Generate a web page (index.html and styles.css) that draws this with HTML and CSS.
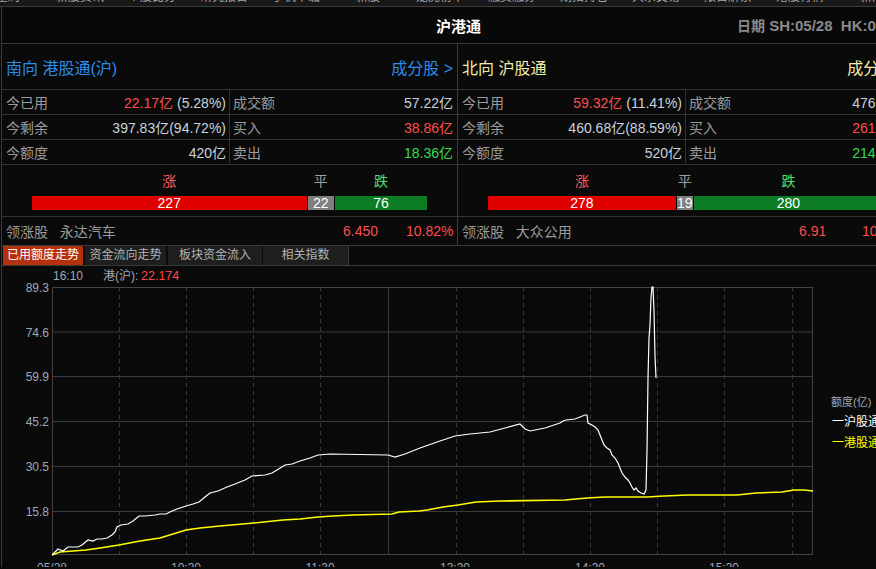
FILE: index.html
```html
<!DOCTYPE html>
<html lang="zh-CN">
<head>
<meta charset="utf-8">
<title>沪港通</title>
<link rel="stylesheet" href="styles.css">
</head>
<body>
<div class="app">
  <div class="menubar">
    <div class="menu-inner">
      <span>全局</span><span>新股资讯</span><span>个股比分</span><span>研究报告</span><span>手机下载</span><span>新股</span><span>龙虎榜单</span><span>融资融券</span><span>期指持仓</span><span>大宗交易</span><span>限售解禁</span><span>港股行情</span><span>新闻</span>
    </div>
  </div>
  <div class="titlebar">
    <div></div>
    <div class="title">沪港通</div>
    <div class="date"><span class="date-cn">日期</span> SH:05/28&nbsp;&nbsp;HK:05/28</div>
  </div>

  <div class="panels">
    <section class="panel">
      <div class="phead south"><span>南向 港股通(沪)</span><span>成分股 &gt;</span></div>
      <div class="prow">
        <div class="cell"><span class="lbl">今已用</span><span class="val"><span class="up">22.17亿</span> (5.28%)</span></div>
        <div class="cell"><span class="lbl">成交额</span><span class="val">57.22亿</span></div>
      </div>
      <div class="prow">
        <div class="cell"><span class="lbl">今剩余</span><span class="val">397.83亿(94.72%)</span></div>
        <div class="cell"><span class="lbl">买入</span><span class="val up">38.86亿</span></div>
      </div>
      <div class="prow">
        <div class="cell"><span class="lbl">今额度</span><span class="val">420亿</span></div>
        <div class="cell"><span class="lbl">卖出</span><span class="val down">18.36亿</span></div>
      </div>
      <div class="breadth">
        <div class="blabels">
          <span class="bl-up" style="flex-grow:227">涨</span><span class="bl-flat" style="flex-grow:22">平</span><span class="bl-down" style="flex-grow:76">跌</span>
        </div>
        <div class="bbar">
          <span class="seg seg-up" style="flex-grow:227">227</span><span class="seg seg-flat" style="flex-grow:22">22</span><span class="seg seg-down" style="flex-grow:76">76</span>
        </div>
      </div>
      <div class="leader">
        <span class="lbl">领涨股&nbsp;&nbsp;&nbsp;永达汽车</span><span class="up">6.450</span><span class="up">10.82%</span>
      </div>
    </section>

    <section class="panel">
      <div class="phead north"><span>北向 沪股通</span><span>成分股 &gt;</span></div>
      <div class="prow">
        <div class="cell"><span class="lbl">今已用</span><span class="val"><span class="up">59.32亿</span> (11.41%)</span></div>
        <div class="cell"><span class="lbl">成交额</span><span class="val">476.54亿</span></div>
      </div>
      <div class="prow">
        <div class="cell"><span class="lbl">今剩余</span><span class="val">460.68亿(88.59%)</span></div>
        <div class="cell"><span class="lbl">买入</span><span class="val up">261.93亿</span></div>
      </div>
      <div class="prow">
        <div class="cell"><span class="lbl">今额度</span><span class="val">520亿</span></div>
        <div class="cell"><span class="lbl">卖出</span><span class="val down">214.61亿</span></div>
      </div>
      <div class="breadth">
        <div class="blabels">
          <span class="bl-up" style="flex-grow:278">涨</span><span class="bl-flat" style="flex-grow:19">平</span><span class="bl-down" style="flex-grow:280">跌</span>
        </div>
        <div class="bbar">
          <span class="seg seg-up" style="flex-grow:278">278</span><span class="seg seg-flat" style="flex-grow:19">19</span><span class="seg seg-down" style="flex-grow:280">280</span>
        </div>
      </div>
      <div class="leader">
        <span class="lbl">领涨股&nbsp;&nbsp;&nbsp;大众公用</span><span class="up">6.91</span><span class="up">10.03%</span>
      </div>
    </section>
  </div>

  <div class="tabs">
    <span class="tab t1 active">已用额度走势</span>
    <span class="tab t2">资金流向走势</span>
    <span class="tab t3">板块资金流入</span>
    <span class="tab t4">相关指数</span>
  </div>

  <div class="chart">
    <svg class="chart-svg" width="913" height="301" viewBox="2 268 913 301" xmlns="http://www.w3.org/2000/svg">
      <text class="axis" x="53" y="282">16:10</text>
      <text class="axis" x="103" y="282">港(沪):</text>
      <text class="redtxt" x="141" y="282">22.174</text>

      <g class="grid">
        <line x1="52" y1="334" x2="813" y2="334"/>
        <line x1="52" y1="378.5" x2="813" y2="378.5"/>
        <line x1="52" y1="423.5" x2="813" y2="423.5"/>
        <line x1="52" y1="468.5" x2="813" y2="468.5"/>
        <line x1="52" y1="513.5" x2="813" y2="513.5"/>
        <line x1="388.5" y1="289" x2="388.5" y2="557"/>
      </g>
      <g class="dash">
        <line x1="119.5" y1="289" x2="119.5" y2="557"/>
        <line x1="186.5" y1="289" x2="186.5" y2="557"/>
        <line x1="253.5" y1="289" x2="253.5" y2="557"/>
        <line x1="320.5" y1="289" x2="320.5" y2="557"/>
        <line x1="456.5" y1="289" x2="456.5" y2="557"/>
        <line x1="523.5" y1="289" x2="523.5" y2="557"/>
        <line x1="590.5" y1="289" x2="590.5" y2="557"/>
        <line x1="657.5" y1="289" x2="657.5" y2="557"/>
        <line x1="724.5" y1="289" x2="724.5" y2="557"/>
        <line x1="792.5" y1="289" x2="792.5" y2="557"/>
      </g>
      <rect class="frame" x="52.5" y="289.5" width="760" height="267"/>

      <text class="axis" x="49" y="294" text-anchor="end">89.3</text>
      <text class="axis" x="49" y="338.5" text-anchor="end">74.6</text>
      <text class="axis" x="49" y="383" text-anchor="end">59.9</text>
      <text class="axis" x="49" y="428" text-anchor="end">45.2</text>
      <text class="axis" x="49" y="473" text-anchor="end">30.5</text>
      <text class="axis" x="49" y="518" text-anchor="end">15.8</text>

      <text class="axis" x="52" y="574" text-anchor="middle">05/28</text>
      <text class="axis" x="186" y="574" text-anchor="middle">10:30</text>
      <text class="axis" x="320" y="574" text-anchor="middle">11:30</text>
      <text class="axis" x="455" y="574" text-anchor="middle">13:30</text>
      <text class="axis" x="590" y="574" text-anchor="middle">14:30</text>
      <text class="axis" x="724" y="574" text-anchor="middle">15:30</text>

      <polyline class="yline" points="52,557 60,554 86,552 100,550 119,547 140,543 160,540 186,532 200,530 220,528 254,525 283,522 300,521 318,519 333,518 353,517 392,516 399,514 419,513 427,512 443,509 458,507 476,504 500,503 565,502 587,500 605,499 635,499 647,499 664,498 688,497 730,497 737,497 756,495 782,494 794,492 804,492 813,493"/>
      <polyline class="wline" points="52,557 58,551 63,553 68,549 78,549 82,547 88,542 93,543 97,541 102,541 107,540 112,537 115,534 117,529 121,527 128,526 133,523 139,518 145,518 155,517 160,516 166,516 170,514 177,511 186,508 193,506 199,504 205,499 210,495 218,493 227,489 235,486 245,482 252,478 265,477 272,475 277,472 285,467 292,466 300,463 310,460 318,457 330,456 388,457 395,459 405,456 420,450 440,443 455,438 470,436 490,434 505,430 520,426 525,431 530,433 545,430 560,425 563,423 566,422 575,421 585,417 587,417 588,425 592,427 595,429 598,432 600,437 602,442 604,447 607,450 610,452 612,457 615,460 618,465 620,470 622,475 625,479 628,482 630,485 632,489 634,492 636,490 638,493 641,495 644,496 646,492 647,453 648,380 649,340 650,327 651,300 652,289 653,289 654,313 655,358 656,380"/>

      <text class="legend-title" x="831" y="408">额度(亿)</text>
      <text class="legend wtxt" x="832" y="428">一沪股通</text>
      <text class="legend ytxt" x="832" y="449">一港股通</text>
    </svg>
  </div>
</div>
</body>
</html>
```
FILE: styles.css
```css
html, body {
  margin: 0;
  padding: 0;
  background: #0a0a0a;
  overflow: hidden;
  width: 876px;
  height: 569px;
}
body {
  font-family: "Liberation Sans", "Noto Sans CJK SC", sans-serif;
  color: #c8d0da;
}
.app {
  width: 913px;
  margin-left: 1px;
  border-left: 1px solid #3a3a3a;
}
.menubar {
  height: 6px;
  overflow: hidden;
  background: #181818;
  border-bottom: 1px solid #3c3c3c;
  margin-left: -2px;
}
.menu-inner {
  display: flex;
  margin-top: -10px;
  margin-left: -28px;
  font-size: 12px;
  line-height: 14px;
  color: #a8a8a8;
  white-space: nowrap;
}
.menu-inner span {
  flex: 0 0 72px;
  text-align: center;
}
.titlebar {
  height: 36px;
  border-bottom: 1px solid #3a3a3a;
  display: grid;
  grid-template-columns: 1fr auto 1fr;
  align-items: center;
  background: #080808;
}
.title {
  font-size: 15px;
  font-weight: bold;
  color: #ffffff;
}
.date {
  justify-self: start;
  margin-left: 256px;
  font-size: 15px;
  font-weight: bold;
  color: #8a8a8a;
  white-space: nowrap;
}
.date-cn {
  font-size: 14px;
}
.panels {
  display: flex;
}
.panel {
  width: 456px;
  flex: 0 0 456px;
  box-sizing: border-box;
  border-right: 1px solid #3a3a3a;
}
.phead {
  height: 45px;
  border-bottom: 1px solid #333;
  display: flex;
  justify-content: space-between;
  align-items: center;
  padding: 0 4px 0 4px;
  font-size: 16px;
}
.phead.south { color: #2a8ceb; }
.phead.north { color: #f3eba8; }
.prow {
  height: 24px;
  border-bottom: 1px solid #333;
  display: grid;
  grid-template-columns: 228px 1fr;
  font-size: 14px;
}
.cell {
  display: flex;
  justify-content: space-between;
  align-items: center;
  padding: 0 3px 0 4px;
  white-space: nowrap;
}
.cell:first-child {
  border-right: 1px solid #333;
}
.cell:last-child {
  padding: 0 4px 0 3px;
}
.lbl { color: #9c9c9c; }
.val { color: #c8d2dc; }
.up { color: #ff4d4d; }
.down { color: #34de4a; }
.breadth {
  height: 52px;
  border-bottom: 1px solid #333;
  padding: 7px 0 0 30px;
  box-sizing: border-box;
}
.blabels, .bbar {
  display: flex;
  width: 395px;
  gap: 1px;
}
.blabels span {
  flex-basis: 0;
  min-width: 16px;
  text-align: center;
  font-size: 14px;
  line-height: 18px;
}
.bl-up { color: #ff5c5c; }
.bl-flat { color: #a0a0a0; }
.bl-down { color: #4fe070; }
.bbar {
  margin-top: 6px;
  height: 14px;
}
.seg {
  flex-basis: 0;
  min-width: 16px;
  text-align: center;
  font-size: 14px;
  line-height: 14px;
  color: #ffffff;
  overflow: hidden;
}
.seg-up { background: #e00000; }
.seg-flat { background: #808080; }
.seg-down { background: #0c7d24; }
.leader {
  height: 28px;
  border-bottom: 1px solid #3a3a3a;
  display: grid;
  grid-template-columns: 337px 63px 1fr;
  align-items: center;
  padding-left: 4px;
  font-size: 14px;
  white-space: nowrap;
}
.tabs {
  display: flex;
  height: 19px;
  border-bottom: 1px solid #3a3a3a;
  padding-left: 1px;
  font-size: 12px;
  line-height: 19px;
}
.tab {
  background: #1e1e1e;
  color: #b4b4b4;
  text-align: center;
  margin-right: 2px;
  white-space: nowrap;
}
.tab.active {
  background: #b5300d;
  color: #ffffff;
}
.t1 { width: 80px; }
.t2 { width: 81px; }
.t3 { width: 94px; margin-right: 1px; }
.t4 { width: 85px; border-right: 1px solid #3a3a3a; }
.chart {
  height: 301px;
  overflow: hidden;
}
.chart-svg {
  display: block;
}
.chart-svg text {
  font-family: "Liberation Sans", "Noto Sans CJK SC", sans-serif;
}
.axis {
  font-size: 12px;
  fill: #a0a8b4;
}
.redtxt {
  font-size: 12.5px;
  fill: #ff4545;
}
.grid line {
  stroke: #3c3c3c;
  stroke-width: 1;
}
.dash line {
  stroke: #3a3a3a;
  stroke-width: 1;
  stroke-dasharray: 4 4;
}
.frame {
  fill: none;
  stroke: #444;
  stroke-width: 1;
}
.yline {
  fill: none;
  stroke: #ffff00;
  stroke-width: 1.6;
}
.wline {
  fill: none;
  stroke: #ffffff;
  stroke-width: 1.2;
}
.legend {
  font-size: 12px;
}
.legend-title {
  font-size: 11px;
  fill: #a0a8b4;
}
.wtxt { fill: #ffffff; }
.ytxt { fill: #ffff00; }
```
